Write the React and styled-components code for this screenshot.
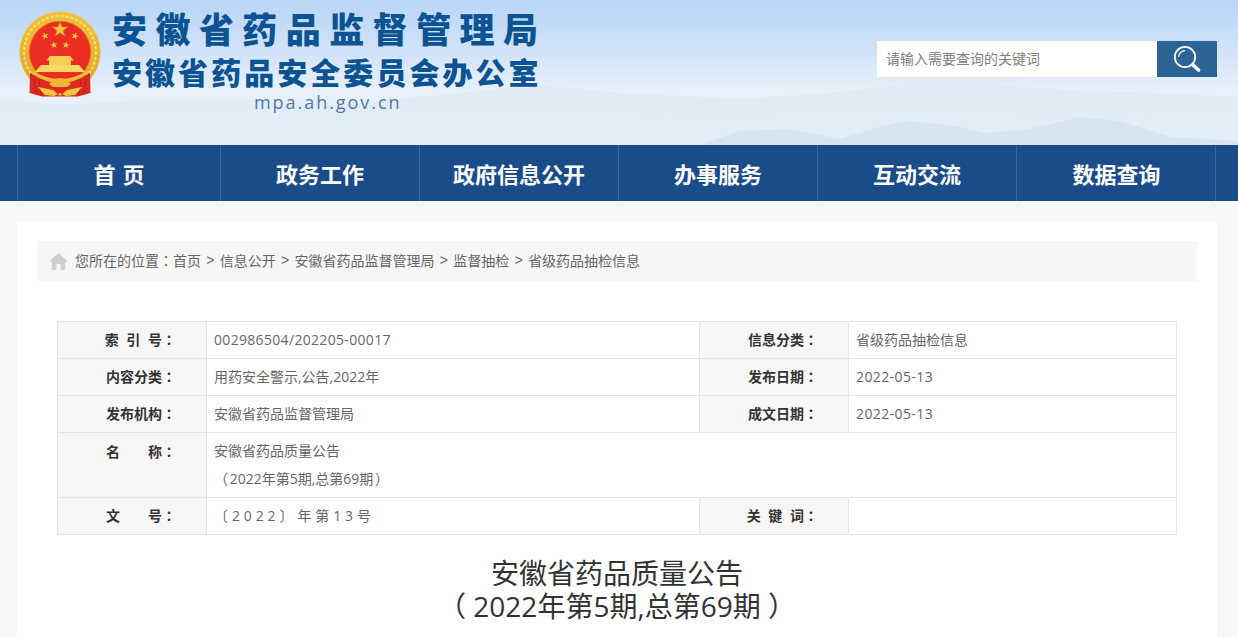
import React from 'react';
import styled, { createGlobalStyle } from 'styled-components';

const GlobalStyle = createGlobalStyle`
  html, body {
    margin: 0;
    padding: 0;
    height: 637px;
    overflow: hidden;
    background: #f7f7f7;
  }
  body {
    font-family: "Open Sans", "Noto Sans CJK SC", sans-serif;
    color: #666;
  }
`;

const Page = styled.div`
  width: 1238px;
  height: 637px;
  overflow: hidden;
`;

const Header = styled.header`
  position: relative;
  height: 145px;
  display: flex;
  justify-content: space-between;
  overflow: hidden;
  background: linear-gradient(180deg, #b9d5f8 0%, #d3e4f8 38%, #e8f0f9 62%, #e4eef7 100%);
`;

const Mountains = styled.svg`
  position: absolute;
  left: 0;
  bottom: 0;
  width: 1238px;
  height: 90px;
`;

const Brand = styled.div`
  position: relative;
  display: flex;
  padding: 11px 0 0 19px;
`;

const Emblem = styled.svg`
  width: 82px;
  height: 86px;
  flex: none;
`;

const BrandText = styled.div`
  margin: -1px 0 0 11px;
  display: flex;
  flex-direction: column;
`;

const TitleMain = styled.div`
  font-family: "Noto Sans CJK SC", sans-serif;
  font-size: 35px;
  line-height: 36px;
  font-weight: 900;
  letter-spacing: 8.45px;
  color: #0b5393;
  white-space: nowrap;
`;

const TitleSub = styled.div`
  font-family: "Noto Sans CJK SC", sans-serif;
  font-size: 30px;
  line-height: 36px;
  margin-top: 7px;
  font-weight: 900;
  letter-spacing: 3.05px;
  color: #0b5393;
  white-space: nowrap;
`;

const Domain = styled.div`
  font-family: "Open Sans", "Noto Sans", sans-serif;
  font-size: 18px;
  line-height: 22px;
  margin: 2px 0 0 142px;
  letter-spacing: 1.95px;
  color: #527a9e;
`;

const SearchBox = styled.form`
  position: relative;
  display: flex;
  width: 340px;
  height: 36px;
  margin: 41px 21px 0 0;
`;

const SearchInput = styled.input`
  width: 280px;
  height: 36px;
  box-sizing: border-box;
  padding: 0 9px 2px;
  border: 0;
  outline: 0;
  background: #fff;
  font-family: inherit;
  font-size: 14px;
  &::placeholder {
    color: #808080;
    opacity: 1;
  }
`;

const SearchButton = styled.button`
  width: 60px;
  height: 36px;
  padding: 0;
  border: 0;
  background: #2d6496;
  display: flex;
  align-items: center;
  justify-content: center;
`;

const Nav = styled.nav`
  height: 56px;
  background: #1a4c8a;
  padding-left: 17px;
`;

const NavList = styled.ul`
  display: grid;
  grid-template-columns: 203px repeat(4, 199px) 198px;
  width: 1198px;
  height: 56px;
  margin: 0;
  padding: 0;
  list-style: none;
  border-right: 1px solid #3d6699;
`;

const NavItem = styled.li`
  border-left: 1px solid #3d6699;
  display: flex;
  align-items: center;
  justify-content: center;
  font-family: "Noto Sans CJK SC", sans-serif;
  font-size: 22px;
  font-weight: 700;
  word-spacing: 2px;
  color: #fff;
  white-space: pre;
  &:last-child {
    padding-left: 2px;
  }
`;

const Card = styled.main`
  width: 1200px;
  height: 416px;
  margin: 20px 0 0 17px;
  padding: 20px;
  box-sizing: border-box;
  background: #fff;
`;

const Crumbs = styled.div`
  height: 40px;
  box-sizing: border-box;
  display: flex;
  align-items: center;
  padding: 0 0 2px 12px;
  background: #f6f6f6;
  font-size: 14px;
  color: #666;
  white-space: pre;
`;

const HomeIcon = styled.svg`
  width: 19px;
  height: 17px;
  margin: 2px 7px 0 0;
`;

const Sep = styled.span`
  margin: 0 5.3px;
  font-family: "Liberation Sans", sans-serif;
`;

// the TC face centres the full-width colon in its box
const Colon = styled.span`
  font-family: "Noto Sans CJK TC", sans-serif;
`;

const InfoTable = styled.table`
  width: 1119px;
  margin: 40px 0 0 20px;
  border-collapse: collapse;
  table-layout: fixed;
  font-size: 14px;
`;

const Label = styled.th`
  height: 37px;
  box-sizing: border-box;
  padding: 0 30px 2px 0;
  border: 1px solid #e5e5e5;
  background: #f7f7f7;
  color: #333;
  font-weight: 700;
  text-align: right;
  word-spacing: 4px;
  vertical-align: ${p => (p.$top ? 'top' : 'middle')};
  line-height: ${p => (p.$top ? '36px' : 'normal')};
  white-space: pre;
`;

const Value = styled.td`
  padding: 0 7px 2px;
  border: 1px solid #e5e5e5;
  color: #666;
  letter-spacing: ${p => (p.$spacing ? p.$spacing : '0')};
`;

const TallValue = styled.td`
  padding: 4px 7px;
  border: 1px solid #e5e5e5;
  color: #666;
  line-height: 28px;
  word-spacing: -2px;
`;

const Heading = styled.h1`
  margin: 22px 0 0;
  font-size: 28px;
  line-height: 33px;
  font-weight: 400;
  color: #333;
  text-align: center;
`;

const navItems = ['首 页', '政务工作', '政府信息公开', '办事服务', '互动交流', '数据查询'];
const crumbs = ['信息公开', '安徽省药品监督管理局', '监督抽检', '省级药品抽检信息'];

const star = (cx, cy, r, rot = 0) => {
  const pts = [];
  for (let i = 0; i < 10; i++) {
    const rad = i % 2 ? r * 0.4 : r;
    const a = ((-90 + rot + i * 36) * Math.PI) / 180;
    pts.push(`${(cx + rad * Math.cos(a)).toFixed(2)},${(cy + rad * Math.sin(a)).toFixed(2)}`);
  }
  return pts.join(' ');
};

const NationalEmblem = () => (
  <Emblem viewBox="19 11 82 86">
    <defs>
      <linearGradient id="gold" x1="0" y1="0" x2="0" y2="1">
        <stop offset="0" stopColor="#f2c23a" />
        <stop offset="1" stopColor="#e0a526" />
      </linearGradient>
    </defs>
    {/* ring and red disc */}
    <circle cx="60" cy="52" r="40.5" fill="url(#gold)" />
    <circle cx="60" cy="52" r="36" fill="none" stroke="#f8de84" strokeWidth="2" strokeDasharray="3 2" />
    <circle cx="60" cy="52" r="31" fill="#ec2d23" stroke="#d99a1e" strokeWidth="0.8" />
    {/* stars */}
    <polygon points={star(60, 29.5, 8)} fill="#f6c63c" stroke="#c48f1c" strokeWidth="0.4" />
    <polygon points={star(45, 36, 3.8, -20)} fill="#f6c63c" />
    <polygon points={star(75, 36, 3.8, 20)} fill="#f6c63c" />
    <polygon points={star(54, 45, 3.8, -10)} fill="#f6c63c" />
    <polygon points={star(66, 45, 3.8, 10)} fill="#f6c63c" />
    {/* gate */}
    <path d="M50 56 H70 L74 60.5 H71 V65 H49 V60.5 H46 Z" fill="#f7cf52" />
    <path d="M41 65 H79 L85 72 H35 Z" fill="#f9d765" />
    {/* ribbons */}
    <path d="M30 73 L60 84 L90 73 L90.5 93 L78 96.5 H42 L29.5 93 Z" fill="#dd2a20" />
    <path d="M34 78 L36 94 M39 80 L41 95 M86 78 L84 94 M81 80 L79 95" stroke="#b31d15" strokeWidth="0.8" fill="none" />
    {/* band and knot */}
    <path d="M31 70 Q60 88 89 70 L88 74 Q60 92 32 74 Z" fill="#f0bd36" />
    <path d="M49 84 Q60 72 71 84 L67 87 H53 Z" fill="#ecb834" />
    <path d="M38 87 L53 90 L60 96 L67 90 L82 87 L75 95 L66 96 L60 93 L54 96 L45 95 Z" fill="#f4c844" />
  </Emblem>
);

const App = () => (
  <Page>
    <GlobalStyle />
    <Header>
      <Mountains viewBox="0 0 1238 90" preserveAspectRatio="none">
        <path d="M0 44 L60 50 L130 46 L240 44 L330 50 L420 42 L540 30 L620 38 L740 44 L830 38 L880 32 L940 26 L1000 30 L1080 36 L1160 38 L1238 42 V90 H0 Z" fill="#dce9f5" opacity="0.55" />
        <path d="M0 52 L120 56 L300 58 L500 54 L700 60 L900 56 L1100 60 L1238 56 V90 H0 Z" fill="#e4eef8" opacity="0.6" />
        <path d="M700 90 L740 76 L790 74 L840 84 L880 72 L905 66 L950 70 L985 78 L1030 74 L1080 62 L1120 66 L1170 82 L1238 86 V90 Z" fill="#d3e3f0" opacity="0.85" />
      </Mountains>
      <Brand>
        <NationalEmblem />
        <BrandText>
          <TitleMain>安徽省药品监督管理局</TitleMain>
          <TitleSub>安徽省药品安全委员会办公室</TitleSub>
          <Domain>mpa.ah.gov.cn</Domain>
        </BrandText>
      </Brand>
      <SearchBox>
        <SearchInput placeholder="请输入需要查询的关键词" />
        <SearchButton type="button" aria-label="搜索">
          <svg width="28" height="28" viewBox="0 0 28 28" fill="none">
            <circle cx="12" cy="12" r="10.2" stroke="#fff" strokeWidth="1.8" />
            <path d="M5.6 12 A6.4 6.4 0 0 1 12 5.6" stroke="#fff" strokeWidth="1.2" />
            <path d="M20 20 L25.5 25" stroke="#fff" strokeWidth="3.6" strokeLinecap="round" />
          </svg>
        </SearchButton>
      </SearchBox>
    </Header>
    <Nav>
      <NavList>
        {navItems.map(item => (
          <NavItem key={item}>{item}</NavItem>
        ))}
      </NavList>
    </Nav>
    <Card>
      <Crumbs>
        <HomeIcon viewBox="0 0 19 17">
          <path d="M9.5 0 L19 8.5 H16.2 V17 H11.6 V11 H7.4 V17 H2.8 V8.5 H0 Z" fill="#cfcfcf" />
        </HomeIcon>
        您所在的位置<Colon>：</Colon>首页
        {crumbs.map(c => (
          <React.Fragment key={c}>
            <Sep>&gt;</Sep>
            {c}
          </React.Fragment>
        ))}
      </Crumbs>
      <InfoTable>
        <colgroup>
          <col width="149" />
          <col width="493" />
          <col width="149" />
          <col width="328" />
        </colgroup>
        <tbody>
          <tr>
            <Label>索 引 号<Colon>：</Colon></Label>
            <Value $spacing="0.32px">002986504/202205-00017</Value>
            <Label>信息分类<Colon>：</Colon></Label>
            <Value>省级药品抽检信息</Value>
          </tr>
          <tr>
            <Label>内容分类<Colon>：</Colon></Label>
            <Value>用药安全警示,公告,2022年</Value>
            <Label>发布日期<Colon>：</Colon></Label>
            <Value $spacing="0.4px">2022-05-13</Value>
          </tr>
          <tr>
            <Label>发布机构<Colon>：</Colon></Label>
            <Value>安徽省药品监督管理局</Value>
            <Label>成文日期<Colon>：</Colon></Label>
            <Value $spacing="0.4px">2022-05-13</Value>
          </tr>
          <tr>
            <Label $top>名　　称<Colon>：</Colon></Label>
            <TallValue colSpan={3}>
              安徽省药品质量公告
              <br />
              （ 2022年第5期,总第69期 ）
            </TallValue>
          </tr>
          <tr>
            <Label>文　　号<Colon>：</Colon></Label>
            <Value $spacing="3.9px">〔2022〕年第13号</Value>
            <Label>关 键 词<Colon>：</Colon></Label>
            <Value />
          </tr>
        </tbody>
      </InfoTable>
      <Heading>
        安徽省药品质量公告
        <br />
        （ 2022年第5期,总第69期 ）
      </Heading>
    </Card>
  </Page>
);

export default App;
